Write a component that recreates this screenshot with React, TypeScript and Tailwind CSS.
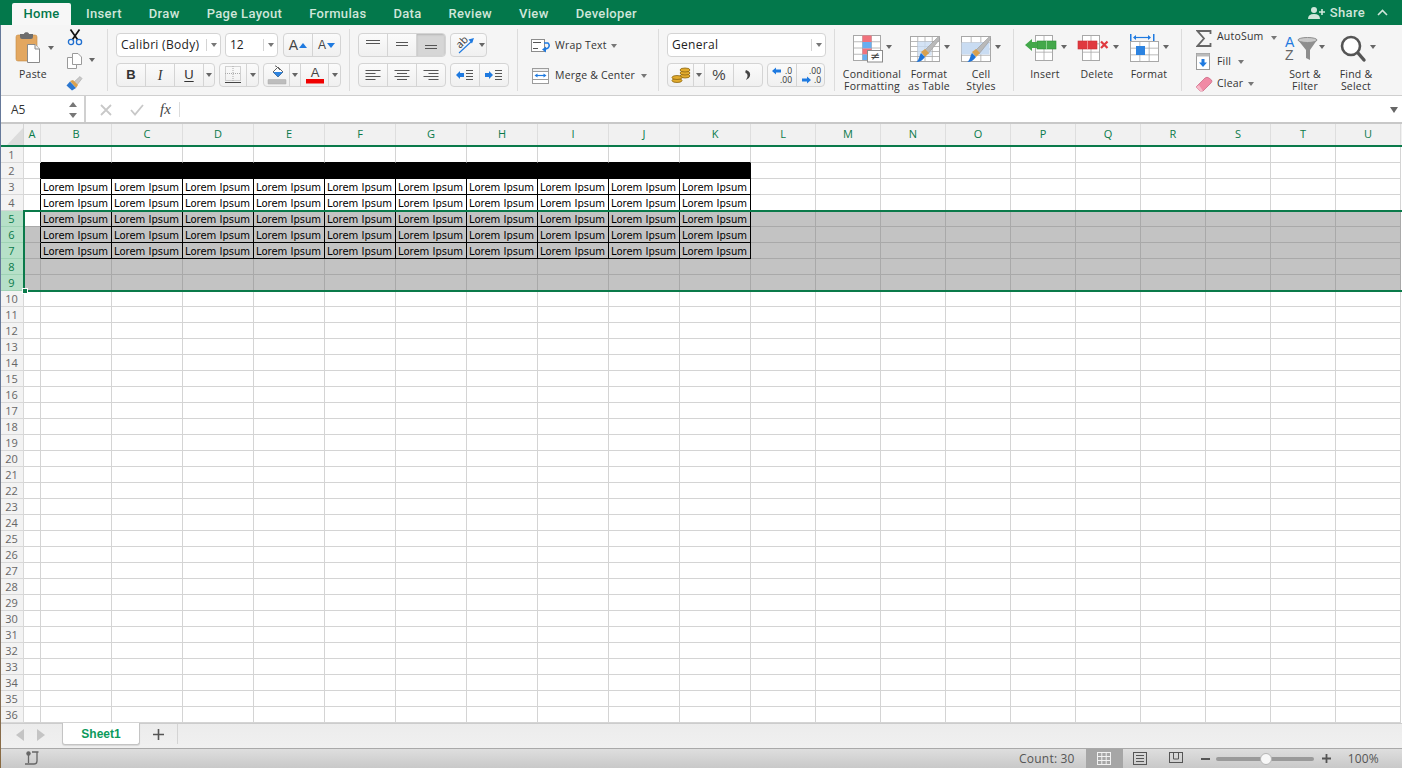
import React from "react";

const UI = "font-['Open_Sans','Noto_Sans',sans-serif]";
const COLS = ["A","B","C","D","E","F","G","H","I","J","K","L","M","N","O","P","Q","R","S","T","U"];
const colW = (i: number) => (i === 0 ? "w-[17px]" : i <= 10 ? "w-[71px]" : "w-[65px]");
const ROWS = Array.from({ length: 36 }, (_, i) => i + 1);

function Caret({ x, y, c = "#666" }: { x: number; y: number; c?: string }) {
  return <polygon points={`${x - 3},${y - 2} ${x + 3},${y - 2} ${x},${y + 2}`} fill={c} />;
}
function CaretBox({ c = "#777" }: { c?: string }) {
  return (
    <svg width="8" height="6" viewBox="0 0 8 6" className="shrink-0">
      <polygon points="1,1 7,1 4,5" fill={c} />
    </svg>
  );
}
function Cell({ w, last, children, active }: { w: string; last?: boolean; children: React.ReactNode; active?: boolean }) {
  return (
    <div className={`${w} flex items-center justify-center ${last ? "" : "border-r border-[#d4d4d4]"} ${active ? "bg-[#d6d6d6] shadow-[inset_0_1px_2px_rgba(0,0,0,0.15)]" : ""}`}>
      {children}
    </div>
  );
}
function Seg({ children, w }: { children: React.ReactNode; w: string }) {
  return (
    <div className={`${w} h-[24px] flex rounded-[4px] border border-[#d4d4d4] bg-gradient-to-b from-[#fbfbfb] to-[#f0f0f0] overflow-hidden shrink-0`}>
      {children}
    </div>
  );
}
function Lines({ ws, gap = 3, align = "left" }: { ws: number[]; gap?: number; align?: string }) {
  return (
    <svg width="16" height="12" viewBox="0 0 16 12">
      {ws.map((w, i) => {
        const x = align === "left" ? 0.5 : align === "right" ? 15.5 - w : 8 - w / 2;
        return <rect key={i} x={x} y={1 + i * gap} width={w} height="1" fill="#555" />;
      })}
    </svg>
  );
}
function Indent({ dir }: { dir: "l" | "r" }) {
  return (
    <svg width="18" height="12" viewBox="0 0 18 12">
      <polygon points={dir === "l" ? "0,6 4,2 4,4 8,4 8,8 4,8 4,10" : "8,6 4,2 4,4 0,4 0,8 4,8 4,10"} fill="#1f7ae0" />
      {[1, 4, 7, 10].map((y) => (
        <rect key={y} x="10" y={y} width="7" height="1" fill="#555" />
      ))}
    </svg>
  );
}
function Big({ w, icon, lines, cls = "" }: { w: string; icon: React.ReactNode; lines: string[]; cls?: string }) {
  return (
    <div className={`${w} ${cls} shrink-0 flex flex-col items-center pt-[3px]`}>
      <div className="h-[32px] w-full">{icon}</div>
      <div className="mt-[4px] text-center text-[10.5px] leading-[12px] tracking-[0.2px] text-[#333] whitespace-nowrap">
        {lines.map((l) => (
          <div key={l}>{l}</div>
        ))}
      </div>
    </div>
  );
}
function Group({ w, children, last }: { w: string; children: React.ReactNode; last?: boolean }) {
  return (
    <div className={`${w} h-[62px] my-[4px] shrink-0 ${last ? "" : "border-r border-[#dcdcdc]"}`}>{children}</div>
  );
}
function MiniTable({ x, y, w, h, nx, ny, fill = "#fff", stroke = "#a8a8a8" }: { x: number; y: number; w: number; h: number; nx: number; ny: number; fill?: string; stroke?: string }) {
  return (
    <g>
      <rect x={x + 0.5} y={y + 0.5} width={w} height={h} fill={fill} stroke={stroke} />
      {Array.from({ length: nx - 1 }, (_, i) => (
        <line key={i} x1={x + 0.5 + ((i + 1) * w) / nx} x2={x + 0.5 + ((i + 1) * w) / nx} y1={y} y2={y + h} stroke={stroke} strokeWidth="0.8" />
      ))}
      {Array.from({ length: ny - 1 }, (_, i) => (
        <line key={i} y1={y + 0.5 + ((i + 1) * h) / ny} y2={y + 0.5 + ((i + 1) * h) / ny} x1={x} x2={x + w} stroke={stroke} strokeWidth="0.8" />
      ))}
    </g>
  );
}
function Brush({ dx }: { dx: number }) {
  return (
    <g transform={`translate(${dx},0)`}>
      <path d="M14 19 L28 5 L30 7 L18 22 Z" fill="#b9b9b9" stroke="#8e8e8e" strokeWidth="0.5" />
      <path d="M11 20 L15 17 L19 21 L15 25 Z" fill="#d9a14e" />
      <path d="M6 30 C9 29 9 24 11 21 L15 25 C13 28 10 30 6 30 Z" fill="#1f74d8" />
    </g>
  );
}

const PasteIcon = (
  <svg width="42" height="32" viewBox="0 0 42 32" className="overflow-visible">
    <rect x="2" y="3" width="21" height="26" rx="2" fill="#e3a760" stroke="#c48b45" strokeWidth="0.6" />
    <path d="M6 5 L6 2 L10 2 C10 -0.5 15 -0.5 15 2 L19 2 L19 5 Q19 7 17 7 L8 7 Q6 7 6 5 Z" fill="#6e6e6e" />
    <path d="M13.5 12.5 L21 12.5 L25.5 17 L25.5 30.5 L13.5 30.5 Z" fill="#fff" stroke="#8a8a8a" />
    <path d="M21 12.5 L21 17 L25.5 17" fill="#eee" stroke="#8a8a8a" />
    <Caret x={37} y={16} c="#666" />
  </svg>
);
const Scissors = (
  <svg width="16" height="17" viewBox="0 0 16 17">
    <path d="M3.5 0.5 L10.5 10.5 M12.5 0.5 L5.5 10.5" stroke="#111" strokeWidth="1.7" />
    <circle cx="4" cy="13" r="2.6" fill="none" stroke="#1f6fd0" strokeWidth="1.3" />
    <circle cx="12" cy="13" r="2.6" fill="none" stroke="#1f6fd0" strokeWidth="1.3" />
  </svg>
);
const CopyIcon = (
  <svg width="30" height="16" viewBox="0 0 30 16">
    <path d="M5.5 0.5 L11 0.5 L14.5 4 L14.5 11.5 L5.5 11.5 Z" fill="#fff" stroke="#9a9a9a" />
    <path d="M0.5 4.5 L5.5 4.5 L5.5 11.5 L9.5 11.5 L9.5 15.5 L0.5 15.5 Z" fill="#fff" stroke="#9a9a9a" />
    <Caret x={25} y={7} c="#666" />
  </svg>
);
const BrushSmall = (
  <svg width="17" height="15" viewBox="0 0 17 15">
    <path d="M8 6 L14 0.5 L16 2.5 L11 9 Z" fill="#c9c9c9" stroke="#999" strokeWidth="0.5" />
    <path d="M4 5 L7 4 L12 9 L10 12 Z" fill="#d9a14e" />
    <path d="M0.5 9.5 L4 5.5 L10 12 L6 14.5 Z" fill="#2a76cf" />
  </svg>
);
const FontColorA = (
  <svg width="20" height="20" viewBox="0 0 20 20">
    <text x="10" y="12" textAnchor="middle" fontSize="13" fontFamily="'Liberation Sans',sans-serif" fill="#444">A</text>
    <rect x="1" y="14" width="18" height="4.5" fill="#f00000" />
  </svg>
);
const FillIcon = (
  <svg width="20" height="20" viewBox="0 0 20 20">
    <path d="M6 7 L11 2 L16 7 L11 12 Z" fill="#fff" stroke="#666" />
    <path d="M8 1 L9 1 L13 5" stroke="#666" fill="none" />
    <path d="M6 7 L16 7 L11 12 Z" fill="#2d83e0" />
    <rect x="1" y="14.5" width="18" height="4.5" rx="0.5" fill="#bdbdbd" stroke="#aaa" strokeWidth="0.5" />
  </svg>
);
const BorderIcon = (
  <svg width="18" height="20" viewBox="0 0 18 20">
    <g stroke="#aaa" strokeDasharray="1 1" fill="none">
      <rect x="1.5" y="1.5" width="15" height="14" />
      <line x1="9" x2="9" y1="1" y2="16" />
      <line x1="1" x2="17" y1="8.5" y2="8.5" />
    </g>
    <rect x="1" y="17" width="16" height="1" fill="#444" />
  </svg>
);
const Orient = (
  <svg width="36" height="22" viewBox="0 0 36 22" className="overflow-visible">
    <text x="0" y="0" fontSize="10.5" fontFamily="'Open Sans',sans-serif" fill="#333" transform="translate(9,15) rotate(-45)">ab</text>
    <path d="M8 19 L21 7" stroke="#1f7ae0" strokeWidth="1.1" />
    <polygon points="23,4 17.5,5.5 21,9.5" fill="#1f7ae0" />
    <Caret x={31} y={11} c="#666" />
  </svg>
);
const WrapIcon = (
  <svg width="20" height="15" viewBox="0 0 20 15">
    <rect x="0.5" y="1.5" width="13" height="12" fill="#fff" stroke="#8c8c8c" />
    <rect x="2" y="4" width="8" height="1" fill="#555" />
    <rect x="2" y="10" width="5" height="1" fill="#555" />
    <path d="M13 5 L17 5 Q19.5 7.5 17 10 L13.5 11.5" fill="none" stroke="#1f7ae0" strokeWidth="1.5" />
    <polygon points="11,11.5 15,8.5 15,14.5" fill="#1f7ae0" />
  </svg>
);
const MergeIcon = (
  <svg width="18" height="16" viewBox="0 0 18 16">
    <rect x="0.5" y="0.5" width="16" height="15" fill="#fff" stroke="#9c9c9c" />
    <rect x="0.5" y="0.5" width="16" height="3" fill="#eee" stroke="#9c9c9c" />
    <rect x="0.5" y="11.5" width="16" height="4" fill="#fff" stroke="#9c9c9c" />
    <path d="M4 7.5 L13 7.5" stroke="#1f7ae0" strokeWidth="1.2" />
    <polygon points="2.5,7.5 5.5,5.5 5.5,9.5" fill="#1f7ae0" />
    <polygon points="14.5,7.5 11.5,5.5 11.5,9.5" fill="#1f7ae0" />
  </svg>
);
const Coins = (
  <svg width="20" height="16" viewBox="0 0 20 16">
    <g fill="#e2ab2d" stroke="#8a6412" strokeWidth="0.8">
      <ellipse cx="14" cy="9" rx="5" ry="2" />
      <ellipse cx="14" cy="6" rx="5" ry="2" />
      <ellipse cx="14" cy="3" rx="5" ry="2" />
      <ellipse cx="6" cy="13.5" rx="5" ry="2" />
      <ellipse cx="6" cy="10.5" rx="5" ry="2" />
    </g>
  </svg>
);
const IncDec = ({ inc }: { inc: boolean }) => (
  <svg width="22" height="19" viewBox="0 0 22 19" className="overflow-visible">
    <text x="21" y="8" textAnchor="end" fontSize="8.5" fontFamily="'Open Sans',sans-serif" fill="#333">{inc ? ".0" : ".00"}</text>
    <text x="21" y="17" textAnchor="end" fontSize="8.5" fontFamily="'Open Sans',sans-serif" fill="#333">{inc ? ".00" : ".0"}</text>
    {inc ? (
      <polygon points="1,5 5,1.5 5,3.5 10,3.5 10,6.5 5,6.5 5,8.5" fill="#1f7ae0" />
    ) : (
      <polygon points="11,14 7,10.5 7,12.5 2,12.5 2,15.5 7,15.5 7,17.5" fill="#1f7ae0" />
    )}
  </svg>
);

const CondIcon = (
  <svg width="58" height="32" viewBox="0 0 58 32">
    <MiniTable x={10} y={3} w={27} h={25} nx={3} ny={4} />
    <rect x="19.5" y="3.5" width="9" height="6.5" fill="#f1727c" />
    <rect x="19.5" y="10" width="9" height="6.5" fill="#68aef0" />
    <rect x="19.5" y="16.5" width="9" height="6" fill="#f1727c" />
    <rect x="19.5" y="22.5" width="9" height="5.5" fill="#68aef0" />
    <rect x="24.5" y="18.5" width="15" height="11.5" fill="#fff" stroke="#8a8a8a" />
    <text x="32" y="28" textAnchor="middle" fontSize="12" fontFamily="'DejaVu Sans',sans-serif" fill="#444">≠</text>
    <Caret x={46} y={15} />
  </svg>
);
const TableIcon = (
  <svg width="50" height="32" viewBox="0 0 50 32">
    <MiniTable x={6} y={4} w={29} h={25} nx={4} ny={5} />
    <rect x="13.5" y="9.5" width="14" height="14" fill="#c9dcf2" opacity="0.8" />
    <Brush dx={6} />
    <Caret x={43} y={15} />
  </svg>
);
const StylesIcon = (
  <svg width="50" height="32" viewBox="0 0 50 32">
    <MiniTable x={5} y={4} w={29} h={25} nx={3} ny={4} />
    <rect x="5.5" y="10.5" width="28" height="12" fill="#c9dcf2" />
    <Brush dx={5} />
    <Caret x={42} y={15} />
  </svg>
);
const InsertIcon = (
  <svg width="50" height="32" viewBox="0 0 50 32">
    <MiniTable x={15} y={3} w={17} h={25} nx={2} ny={3} />
    <rect x="17" y="9" width="19" height="8" fill="#43a84a" stroke="#2e8b38" strokeWidth="0.6" />
    <line x1="26.5" x2="26.5" y1="9" y2="17" stroke="#8ccf90" />
    <polygon points="5,13 12,7 12,10 17,10 17,16 12,16 12,19" fill="#43a84a" />
    <Caret x={44} y={15} />
  </svg>
);
const DeleteIcon = (
  <svg width="52" height="32" viewBox="0 0 52 32">
    <MiniTable x={11} y={3} w={17} h={25} nx={2} ny={3} />
    <rect x="7" y="9" width="19" height="8" fill="#e0393f" stroke="#c92c33" strokeWidth="0.6" />
    <line x1="16.5" x2="16.5" y1="9" y2="17" stroke="#f08b8e" />
    <path d="M30 9.5 L36.5 16 M36.5 9.5 L30 16" stroke="#e0393f" strokeWidth="2.2" />
    <Caret x={45} y={15} />
  </svg>
);
const FormatIcon = (
  <svg width="52" height="32" viewBox="0 0 52 32">
    <rect x="7" y="2" width="1.5" height="7" fill="#1f7ae0" />
    <rect x="30" y="2" width="1.5" height="7" fill="#1f7ae0" />
    <path d="M11 5.5 L27 5.5" stroke="#1f7ae0" strokeWidth="1.2" />
    <polygon points="10,5.5 13,3 13,8" fill="#1f7ae0" />
    <polygon points="28,5.5 25,3 25,8" fill="#1f7ae0" />
    <MiniTable x={7} y={9} w={28} h={20} nx={3} ny={3} />
    <rect x="13" y="14" width="9" height="9" fill="#2d83e0" />
    <Caret x={43} y={15} />
  </svg>
);
const SortIcon = (
  <svg width="50" height="32" viewBox="0 0 50 32">
    <text x="5" y="14.5" fontSize="14" fontFamily="'Liberation Sans',sans-serif" fill="#1f7ae0">A</text>
    <text x="5" y="28" fontSize="14" fontFamily="'Liberation Sans',sans-serif" fill="#666">Z</text>
    <path d="M18 8 L37 8 L30 18 L30 28 L26 26 L26 18 Z" fill="#8e8e8e" />
    <ellipse cx="27.5" cy="8" rx="9.5" ry="2.5" fill="#c9c9c9" stroke="#8e8e8e" />
    <Caret x={42} y={15} />
  </svg>
);
const FindIcon = (
  <svg width="50" height="32" viewBox="0 0 50 32">
    <circle cx="20" cy="14" r="9" fill="#fff" stroke="#555" strokeWidth="2.6" />
    <path d="M27 21 L33 28" stroke="#555" strokeWidth="3.4" strokeLinecap="round" />
    <Caret x={42} y={15} />
  </svg>
);
const Sigma = (
  <svg width="16" height="17" viewBox="0 0 16 17">
    <path d="M14.5 4 L14.5 1 L1.5 1 L8 8.5 L1.5 16 L14.5 16 L14.5 13" fill="none" stroke="#666" strokeWidth="1.8" />
  </svg>
);
const FillDown = (
  <svg width="15" height="17" viewBox="0 0 15 17">
    <rect x="0.5" y="0.5" width="13" height="16" fill="#fff" stroke="#9a9a9a" />
    <rect x="0.5" y="0.5" width="13" height="3" fill="#bbb" />
    <polygon points="7,14 3,9.5 5.5,9.5 5.5,6 8.5,6 8.5,9.5 11,9.5" fill="#1f7ae0" />
  </svg>
);
const Eraser = (
  <svg width="18" height="16" viewBox="0 0 18 16">
    <path d="M1 11 L10 2 Q12 0.5 14 2 L16.5 4 Q17.5 5.5 16 7 L8 15 L5 15 Z" fill="#f08aa5" stroke="#c9607e" strokeWidth="0.7" />
    <path d="M1 11 L5 15 L8 15 L4 9 Z" fill="#f7b9c9" />
  </svg>
);

function Ribbon() {
  return (
    <div className={`h-[71px] shrink-0 flex bg-[#f5f5f5] border-b border-[#cfcfcf] ${UI}`}>
      <Group w="w-[108px]">
        <div className="flex">
          <Big w="w-[38px]" cls="ml-[14px]" icon={PasteIcon} lines={["Paste"]} />
          <div className="ml-[15px] flex flex-col pt-[0px] gap-[7px]">
            {Scissors}
            {CopyIcon}
            <div className="-ml-[1px]">{BrushSmall}</div>
          </div>
        </div>
      </Group>
      <Group w="w-[242px]">
        <div className="pl-[8px] pt-[4px] flex flex-col gap-[6px]">
          <div className="flex gap-[4px]">
            <div className="w-[105px] h-[24px] flex items-center bg-white border border-[#d4d4d4] rounded-[4px] text-[12px] tracking-[0.3px] text-[#222]">
              <span className="pl-[4px] flex-1 whitespace-nowrap">Calibri (Body)</span>
              <span className="h-[12px] w-px bg-[#d4d4d4]" />
              <span className="w-[13px] flex justify-center"><CaretBox /></span>
            </div>
            <div className="w-[53px] h-[24px] flex items-center bg-white border border-[#d4d4d4] rounded-[4px] text-[12px] text-[#222]">
              <span className="pl-[4px] flex-1">12</span>
              <span className="h-[12px] w-px bg-[#d4d4d4]" />
              <span className="w-[13px] flex justify-center"><CaretBox /></span>
            </div>
            <Seg w="w-[58px] ml-[1px]">
              <Cell w="w-[29px]">
                <span className="flex items-center gap-[1px] text-[14px] leading-none text-[#444] font-['Liberation_Sans',sans-serif]">A<svg width="8" height="5"><polygon points="0,5 8,5 4,0" fill="#1f7ae0" /></svg></span>
              </Cell>
              <Cell w="w-[27px]" last>
                <span className="flex items-center gap-[1px] text-[12px] leading-none text-[#444] font-['Liberation_Sans',sans-serif]">A<svg width="8" height="5"><polygon points="0,0 8,0 4,5" fill="#1f7ae0" /></svg></span>
              </Cell>
            </Seg>
          </div>
          <div className="flex gap-[4px]">
            <Seg w="w-[99px]">
              <Cell w="w-[29px]"><span className="font-bold text-[13px] text-[#333] font-['Liberation_Sans',sans-serif]">B</span></Cell>
              <Cell w="w-[29px]"><span className="italic text-[14px] text-[#333] font-['Liberation_Serif',serif]">I</span></Cell>
              <Cell w="w-[29px]"><span className="underline underline-offset-2 text-[13px] text-[#333] font-['Liberation_Sans',sans-serif]">U</span></Cell>
              <Cell w="w-[10px]" last><CaretBox c="#666" /></Cell>
            </Seg>
            <Seg w="w-[40px]">
              <Cell w="w-[27px]">{BorderIcon}</Cell>
              <Cell w="w-[11px]" last><CaretBox c="#666" /></Cell>
            </Seg>
            <Seg w="w-[78px]">
              <Cell w="w-[26px]">{FillIcon}</Cell>
              <Cell w="w-[11px]"><CaretBox c="#666" /></Cell>
              <Cell w="w-[28px]">{FontColorA}</Cell>
              <Cell w="w-[11px]" last><CaretBox c="#666" /></Cell>
            </Seg>
          </div>
        </div>
      </Group>
      <Group w="w-[168px]">
        <div className="pl-[8px] pt-[4px] flex flex-col gap-[6px]">
          <div className="flex gap-[4px]">
            <Seg w="w-[88px]">
              <Cell w="w-[29px]"><Lines ws={[14, 14]} gap={3} align="center" /></Cell>
              <Cell w="w-[29px]"><div className="pt-[3px]"><Lines ws={[12, 12]} gap={3} align="center" /></div></Cell>
              <Cell w="w-[28px]" last active><div className="pt-[9px]"><Lines ws={[12, 12]} gap={3} align="center" /></div></Cell>
            </Seg>
            <Seg w="w-[37px]"><Cell w="w-full" last>{Orient}</Cell></Seg>
          </div>
          <div className="flex gap-[4px]">
            <Seg w="w-[88px]">
              <Cell w="w-[29px]"><Lines ws={[15, 10, 15, 10]} /></Cell>
              <Cell w="w-[29px]"><Lines ws={[15, 10, 15, 10]} align="center" /></Cell>
              <Cell w="w-[28px]" last><Lines ws={[15, 10, 15, 10]} align="right" /></Cell>
            </Seg>
            <Seg w="w-[59px]">
              <Cell w="w-[29px]"><Indent dir="l" /></Cell>
              <Cell w="w-[28px]" last><Indent dir="r" /></Cell>
            </Seg>
          </div>
        </div>
      </Group>
      <Group w="w-[141px]">
        <div className="pl-[13px] text-[10.5px] tracking-[0.2px] text-[#333] whitespace-nowrap">
          <div className="h-[15px] mt-[9px] flex items-center gap-[3px]">
            {WrapIcon}
            <span className="ml-[1px]">Wrap Text</span>
            <span className="ml-[0px]"><CaretBox /></span>
          </div>
          <div className="h-[16px] mt-[15px] flex items-center gap-[5px] ml-[1px]">
            {MergeIcon}
            <span>Merge &amp; Center</span>
            <CaretBox />
          </div>
        </div>
      </Group>
      <Group w="w-[176px]">
        <div className="pl-[8px] pt-[4px] flex flex-col gap-[6px]">
          <div className="w-[159px] h-[24px] flex items-center bg-white border border-[#d4d4d4] rounded-[4px] text-[12px] tracking-[0.3px] text-[#222]">
            <span className="pl-[4px] flex-1">General</span>
            <span className="h-[12px] w-px bg-[#d4d4d4]" />
            <span className="w-[13px] flex justify-center"><CaretBox /></span>
          </div>
          <div className="flex gap-[4px]">
            <Seg w="w-[96px]">
              <Cell w="w-[26px]">{Coins}</Cell>
              <Cell w="w-[11px]"><CaretBox c="#666" /></Cell>
              <Cell w="w-[29px]"><span className="text-[15px] text-[#444] font-['Liberation_Sans',sans-serif]">%</span></Cell>
              <Cell w="w-[28px]" last>
                <svg width="9" height="12" viewBox="0 0 9 12"><path d="M2 1 Q7 2.5 6 7 Q5.5 9.5 2 11 Q4 8 3.5 6 Q3 4 1.5 4 Q1 2 2 1 Z" fill="#444" /></svg>
              </Cell>
            </Seg>
            <Seg w="w-[58px]">
              <Cell w="w-[29px]"><IncDec inc /></Cell>
              <Cell w="w-[27px]" last><IncDec inc={false} /></Cell>
            </Seg>
          </div>
        </div>
      </Group>
      <Group w="w-[179px]">
        <div className="flex pl-[8px]">
          <Big w="w-[58px]" icon={CondIcon} lines={["Conditional", "Formatting"]} />
          <Big w="w-[50px]" cls="ml-[3px]" icon={TableIcon} lines={["Format", "as Table"]} />
          <Big w="w-[50px]" cls="ml-[2px]" icon={StylesIcon} lines={["Cell", "Styles"]} />
        </div>
      </Group>
      <Group w="w-[168px]">
        <div className="flex pl-[6px]">
          <Big w="w-[50px]" icon={InsertIcon} lines={["Insert"]} />
          <Big w="w-[52px]" cls="ml-[1px]" icon={DeleteIcon} lines={["Delete"]} />
          <Big w="w-[52px]" icon={FormatIcon} lines={["Format"]} />
        </div>
      </Group>
      <Group w="w-[220px]" last>
        <div className="flex">
          <div className="w-[98px] pl-[14px] text-[10.5px] tracking-[0.2px] text-[#333] whitespace-nowrap flex flex-col gap-[6px]">
            <div className="h-[17px] pt-[1px] flex items-center gap-[5px]">{Sigma}<span className="-mt-[2px]">AutoSum</span><span className="ml-[2px]"><CaretBox /></span></div>
            <div className="h-[17px] mt-[1px] flex items-center gap-[6px]">{FillDown}<span>Fill</span><CaretBox /></div>
            <div className="h-[16px] -ml-[1px] flex items-center gap-[4px]">{Eraser}<span>Clear</span><CaretBox /></div>
          </div>
          <Big w="w-[50px]" icon={SortIcon} lines={["Sort &", "Filter"]} />
          <Big w="w-[50px]" cls="ml-[1px]" icon={FindIcon} lines={["Find &", "Select"]} />
        </div>
      </Group>
    </div>
  );
}

function Tabs() {
  const tabs: [string, string][] = [["Insert", "ml-[15px]"], ["Draw", "ml-[27px]"], ["Page Layout", "ml-[27px]"], ["Formulas", "ml-[27px]"], ["Data", "ml-[27px]"], ["Review", "ml-[27px]"], ["View", "ml-[27px]"], ["Developer", "ml-[27px]"]];
  return (
    <div className="h-[25px] shrink-0 bg-[#03784b] flex items-end pl-[12px] font-['Roboto','Open_Sans',sans-serif] text-[13px] font-medium tracking-[0.33px]">
      <div className="w-[59px] h-[22px] bg-[#f7f7f7] rounded-t-[2px] flex items-center justify-center text-[#03784b]">Home</div>
      {tabs.map(([t, m]) => (
        <div key={t} className={`${m} h-[22px] flex items-center text-[#cfe6da]`}>{t}</div>
      ))}
      <div className="ml-auto h-[25px] flex items-center text-[#cfe6da]">
        <svg width="18" height="12" viewBox="0 0 18 12">
          <circle cx="6" cy="3" r="3" fill="#cfe6da" />
          <path d="M0 12 Q0 7 6 7 Q12 7 12 12 Z" fill="#cfe6da" />
          <path d="M14 2 L14 8 M11 5 L17 5" stroke="#cfe6da" strokeWidth="1.6" />
        </svg>
        <span className="ml-[4px]">Share</span>
        <svg className="ml-[12px] mr-[14px]" width="11" height="7" viewBox="0 0 11 7">
          <path d="M1 6 L5.5 1.5 L10 6" fill="none" stroke="#cfe6da" strokeWidth="1.6" />
        </svg>
      </div>
    </div>
  );
}

function FormulaBar() {
  return (
    <div className={`h-[27px] shrink-0 flex bg-white border-b border-[#c8c8c8] ${UI}`}>
      <div className="w-[86px] flex items-center pl-[11px] pr-[7px] pt-[1px] border-r-2 border-[#d0d0d0] text-[12px] text-[#333]">
        <span className="flex-1 pt-[1px]">A5</span>
        <svg width="8" height="18" viewBox="0 0 8 18">
          <polygon points="0,6 8,6 4,1" fill="#777" />
          <polygon points="0,12 8,12 4,17" fill="#777" />
        </svg>
      </div>
      <div className="w-[96px] flex items-center pl-[14px] pt-[1px]">
        <svg width="12" height="12" viewBox="0 0 12 12"><path d="M1 1 L11 11 M11 1 L1 11" stroke="#c8c8c8" strokeWidth="1.8" /></svg>
        <svg className="ml-[18px]" width="14" height="12" viewBox="0 0 14 12"><path d="M1 6 L5 10.5 L13 1" fill="none" stroke="#c8c8c8" strokeWidth="1.8" /></svg>
        <span className="ml-[16px] italic text-[15px] text-[#444] font-['Liberation_Serif',serif]">fx</span>
        <span className="ml-[8px] h-[15px] w-px bg-[#dcdcdc]" />
      </div>
      <div className="flex-1 flex items-center justify-end pr-[4px] pt-[1px]">
        <svg width="8" height="6"><polygon points="0,0 8,0 4,6" fill="#666" /></svg>
      </div>
    </div>
  );
}

function Grid() {
  return (
    <div className={`relative flex-1 min-h-0 overflow-hidden bg-white font-['DejaVu_Sans',sans-serif]`}>
      <div className="h-[24px] flex bg-[#f1f1f1] border-t border-[#c8c8c8] border-b-2 border-b-[#0a7a4a]">
        <div className="w-[24px] flex items-end justify-end border-r border-[#d4d4d4]">
          <svg width="16" height="17" viewBox="0 0 16 17"><polygon points="16,0 16,17 0,17" fill="#dcdcdc" /></svg>
        </div>
        {COLS.map((c, i) => (
          <div key={c} className={`${colW(i)} flex items-center justify-center border-r border-[#dedede] text-[11px] text-[#0a7a4a] ${UI}`}>
            {c}
          </div>
        ))}
      </div>
      {ROWS.map((r) => {
        const sel = r >= 5 && r <= 9;
        return (
          <div key={r} className="h-[16px] flex">
            <div className={`w-[24px] flex items-center justify-center border-r border-b text-[11px] leading-none ${UI} ${sel ? "bg-[#b6e0c8] text-[#0a7a4a] border-[#9fd3b5]" : "bg-[#f3f3f3] text-[#666] border-[#d8d8d8]"}`}>
              {r}
            </div>
            {COLS.map((c, i) => {
              const inTable = i >= 1 && i <= 10;
              const text = inTable && r >= 3 && r <= 7;
              let bg = sel ? "bg-[#c3c3c3]" : "bg-white";
              if (r === 5 && i === 0) bg = "bg-white";
              if (inTable && r === 2) bg = "bg-black";
              const rB = (i === 0 && r >= 2 && r <= 7) || (inTable && r >= 2 && r <= 7) ? "border-r-black" : sel ? "border-r-[#a9a9a9]" : "border-r-[#d4d4d4]";
              const bB = inTable && r >= 1 && r <= 7 ? "border-b-black" : sel ? "border-b-[#a9a9a9]" : "border-b-[#d4d4d4]";
              return (
                <div key={c} className={`${colW(i)} ${bg} ${rB} ${bB} border-r border-b pl-[2px] text-[10px] leading-[17px] text-black whitespace-nowrap overflow-hidden`}>
                  {text ? "Lorem Ipsum" : ""}
                </div>
              );
            })}
          </div>
        );
      })}
      <div className="absolute left-[23px] top-[87px] w-[1379px] h-[82px] border-2 border-r-0 border-[#0a7a4a] pointer-events-none" />
      <div className="absolute left-[22px] top-[165px] w-[6px] h-[6px] bg-[#0a7a4a] border border-white pointer-events-none" />
    </div>
  );
}

function Bottom() {
  return (
    <div className={`shrink-0 ${UI}`}>
      <div className="h-[25px] flex bg-gradient-to-b from-[#ececec] to-[#f0f0f0] border-t border-[#cccccc]">
        <div className="w-[62px] flex items-center pl-[16px] gap-[13px] pb-[3px]">
          <svg width="8" height="12"><polygon points="8,0 8,12 0,6" fill="#c4c4c4" /></svg>
          <svg width="8" height="12"><polygon points="0,0 0,12 8,6" fill="#c4c4c4" /></svg>
        </div>
        <div className="-mt-px w-[78px] h-[22px] bg-white rounded-b-[3px] border-b border-x border-[#c4c4c4] shadow-[0_1px_1px_rgba(0,0,0,0.1)] flex items-center justify-center text-[12px] font-bold text-[#0b9a5c] font-['Liberation_Sans',sans-serif]">
          Sheet1
        </div>
        <div className="w-[38px] h-[20px] flex items-center justify-center border-r border-[#d4d4d4]">
          <svg width="11" height="11" viewBox="0 0 11 11"><path d="M5.5 0 L5.5 11 M0 5.5 L11 5.5" stroke="#555" strokeWidth="1.6" /></svg>
        </div>
      </div>
      <div className="h-[20px] flex items-center bg-gradient-to-b from-[#dedede] to-[#c9c9c9] border-t border-[#a9a9a9] text-[12px] tracking-[0.2px] text-[#555]">
        <svg className="ml-[25px]" width="16" height="15" viewBox="0 0 16 15">
          <circle cx="3.5" cy="2.5" r="2.2" fill="#666" />
          <path d="M3.5 4 L3.5 12 M0 13 L10 13 M7 1 L13.5 1 M12 1 L12 10 Q12 13 9 13" stroke="#666" strokeWidth="1.3" fill="none" />
        </svg>
        <span className="ml-auto pt-[1px]">Count: 30</span>
        <div className="ml-[11px] w-[37px] h-full bg-[#a6a6a6] flex items-center justify-center">
          <svg width="14" height="13" viewBox="0 0 14 13"><g stroke="#f2f2f2" fill="none"><rect x="0.5" y="0.5" width="13" height="12" /><path d="M4.8 0 V13 M9.2 0 V13 M0 4.5 H14 M0 8.5 H14" /></g></svg>
        </div>
        <div className="w-[35px] flex justify-center">
          <svg width="14" height="13" viewBox="0 0 14 13"><g stroke="#555" fill="none"><rect x="0.5" y="0.5" width="13" height="12" /><path d="M3 3.5 H11 M3 6.5 H11 M3 9.5 H11" /></g></svg>
        </div>
        <div className="w-[37px] flex justify-center">
          <svg width="14" height="13" viewBox="0 0 14 13"><g stroke="#555" fill="none"><rect x="0.5" y="0.5" width="13" height="10" /><path d="M4.5 0 V7 H9.5 V0" /></g></svg>
        </div>
        <svg className="ml-[6px]" width="9" height="2"><rect width="9" height="2" fill="#555" /></svg>
        <div className="relative ml-[6px] w-[98px] h-[4px] rounded-full bg-[#9a9a9a]">
          <div className="absolute left-[44px] -top-[4px] w-[12px] h-[12px] rounded-full bg-[#f7f7f7] border border-[#b5b5b5]" />
        </div>
        <svg className="ml-[8px]" width="9" height="9" viewBox="0 0 9 9"><path d="M4.5 0 V9 M0 4.5 H9" stroke="#555" strokeWidth="1.8" /></svg>
        <span className="ml-[17px] mr-[23px] pt-[1px]">100%</span>
      </div>
    </div>
  );
}

export default function App() {
  return (
    <div className="relative w-[1402px] h-[768px] flex flex-col overflow-hidden bg-white">
      <Tabs />
      <Ribbon />
      <FormulaBar />
      <Grid />
      <Bottom />
      <div className="absolute left-0 top-[25px] bottom-0 w-px bg-gradient-to-b from-[#66799a] via-[#66799a] to-[#8a6a40]" />
    </div>
  );
}
